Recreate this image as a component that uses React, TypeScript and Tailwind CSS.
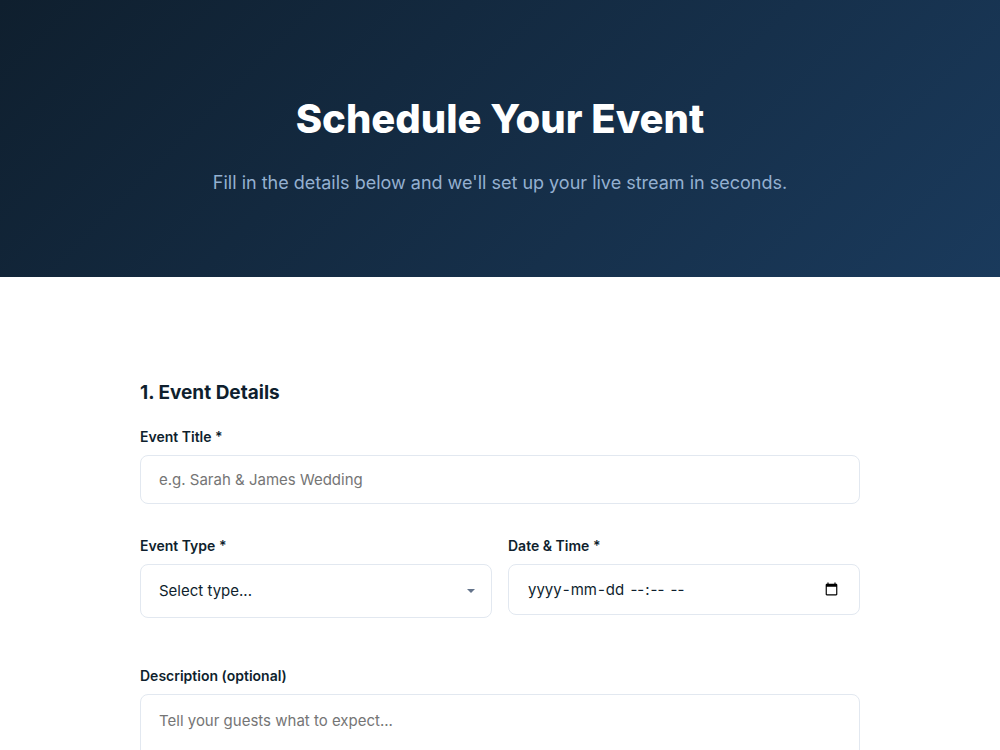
import React, { useState } from 'react';
import clsx from 'clsx';

interface FieldProps {
    id: string;
    label: string;
    children: React.ReactNode;
}

const inputStyles =
    'block w-full rounded-lg border border-[#e2e8f0] bg-white px-[18px] py-3.5 text-[15px] text-[#0f1f2e] placeholder:text-[#757575] focus:border-[#1a3a5c] focus:outline-none';

const Field: React.FC<FieldProps> = ({ id, label, children }) => (
    <div>
        <label htmlFor={id} className="mb-2 block text-sm leading-5 font-semibold">
            {label}
        </label>
        {children}
    </div>
);

// Shown over the empty date field until it gets focus
const DateHint: React.FC = () => (
    <span className="pointer-events-none absolute inset-y-0 left-[19px] flex items-center pt-px text-[15px] whitespace-pre text-[#0f1f2e]">
        <span className="px-px">yyyy</span>-<span className="px-px">mm</span>-<span className="px-px">dd</span>
        <span> </span>
        <span className="px-px">--</span>:<span className="px-px">--</span>
        <span> </span>
        <span className="px-px">--</span>
    </span>
);

export default function App() {
    const [form, setForm] = useState({ title: '', type: '', date: '', description: '' });
    const [editingDate, setEditingDate] = useState(false);

    const showDateHint = !form.date && !editingDate;

    const handleChange = (
        e: React.ChangeEvent<HTMLInputElement | HTMLSelectElement | HTMLTextAreaElement>
    ) => {
        setForm(prev => ({ ...prev, [e.target.name]: e.target.value }));
    };

    return (
        <div className="min-h-screen bg-white font-['Inter',sans-serif] text-[#0f1f2e]">
            <header className="bg-[linear-gradient(135deg,#0f1f2e,#1a3a5c)] px-6 pt-[93px] pb-20 text-center">
                <h1 className="text-[40px] leading-[52px] font-extrabold text-white">Schedule Your Event</h1>
                <p className="mt-6 text-lg leading-7 text-[#94b0d0]">
                    Fill in the details below and we'll set up your live stream in seconds.
                </p>
            </header>

            <main className="mx-auto max-w-[768px] px-6 py-24">
                <form onSubmit={e => e.preventDefault()}>
                    <h2 className="mb-[18px] pt-1 text-[19px] leading-8 font-bold">1. Event Details</h2>

                    <Field id="title" label="Event Title *">
                        <input
                            id="title"
                            name="title"
                            type="text"
                            value={form.title}
                            onChange={handleChange}
                            placeholder="e.g. Sarah & James Wedding"
                            className={`${inputStyles} leading-[19px]`}
                        />
                    </Field>

                    <div className="mt-8 grid grid-cols-2 items-start gap-4">
                        <Field id="type" label="Event Type *">
                            <div className="relative">
                                <select
                                    id="type"
                                    name="type"
                                    value={form.type}
                                    onChange={handleChange}
                                    className={`${inputStyles} appearance-none leading-6`}
                                >
                                    <option value="">Select type...</option>
                                    <option value="wedding">Wedding</option>
                                    <option value="conference">Conference</option>
                                    <option value="concert">Concert</option>
                                </select>
                                <svg
                                    viewBox="0 0 8 4"
                                    className="pointer-events-none absolute top-1/2 right-[17px] h-1 w-2 -translate-y-1/2 fill-[#64748b]"
                                >
                                    <path d="M0 0h8L4 4z" />
                                </svg>
                            </div>
                        </Field>
                        <Field id="date" label="Date & Time *">
                            <div className="relative">
                                <input
                                    id="date"
                                    name="date"
                                    type="datetime-local"
                                    value={form.date}
                                    onChange={handleChange}
                                    onFocus={() => setEditingDate(true)}
                                    onBlur={() => setEditingDate(false)}
                                    className={clsx(
                                        inputStyles,
                                        'h-[51px]',
                                        showDateHint && '[&::-webkit-datetime-edit]:opacity-0'
                                    )}
                                />
                                {showDateHint && <DateHint />}
                            </div>
                        </Field>
                    </div>

                    <div className="mt-12">
                        <Field id="description" label="Description (optional)">
                            <textarea
                                id="description"
                                name="description"
                                rows={4}
                                value={form.description}
                                onChange={handleChange}
                                placeholder="Tell your guests what to expect..."
                                className={`${inputStyles} leading-6`}
                            />
                        </Field>
                    </div>
                </form>
            </main>
        </div>
    );
}
